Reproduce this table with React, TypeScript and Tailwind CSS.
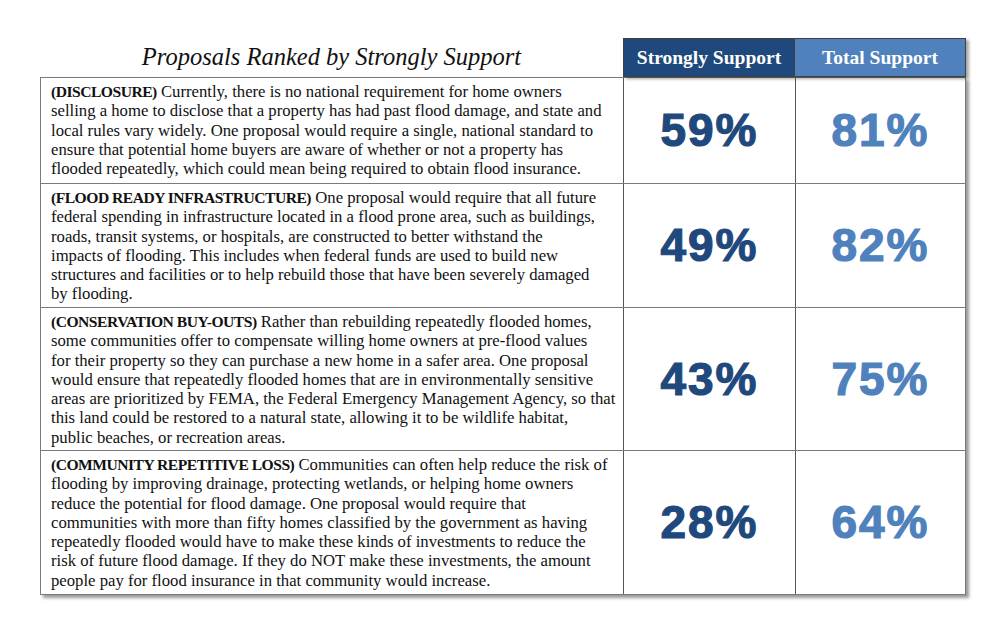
import React from "react";

const rows = [
  {
    h: "h-[105px]",
    tag: "(DISCLOSURE)",
    lines: [
      " Currently, there is no national requirement for home owners",
      "selling a home to disclose that a property has had past flood damage, and state and",
      "local rules vary widely. One proposal would require a single, national standard to",
      "ensure that potential home buyers are aware of whether or not a property has",
      "flooded repeatedly, which could mean being required to obtain flood insurance.",
    ],
    s: "59%",
    t: "81%",
  },
  {
    h: "h-[124px]",
    tag: "(FLOOD READY INFRASTRUCTURE)",
    lines: [
      " One proposal would require that all future",
      "federal spending in infrastructure located in a flood prone area, such as buildings,",
      "roads, transit systems, or hospitals, are constructed to better withstand the",
      "impacts of flooding. This includes when federal funds are used to build new",
      "structures and facilities or to help rebuild those that have been severely damaged",
      "by flooding.",
    ],
    s: "49%",
    t: "82%",
  },
  {
    h: "h-[143px]",
    tag: "(CONSERVATION BUY-OUTS)",
    lines: [
      " Rather than rebuilding repeatedly flooded homes,",
      "some communities offer to compensate willing home owners at pre-flood values",
      "for their property so they can purchase a new home in a safer area. One proposal",
      "would ensure that repeatedly flooded homes that are in environmentally sensitive",
      "areas are prioritized by FEMA, the Federal Emergency Management Agency, so that",
      "this land could be restored to a natural state, allowing it to be wildlife habitat,",
      "public beaches, or recreation areas.",
    ],
    s: "43%",
    t: "75%",
  },
  {
    h: "h-[144px]",
    tag: "(COMMUNITY REPETITIVE LOSS)",
    lines: [
      " Communities can often help reduce the risk of",
      "flooding by improving drainage, protecting wetlands, or helping home owners",
      "reduce the potential for flood damage. One proposal would require that",
      "communities with more than fifty homes classified by the government as having",
      "repeatedly flooded would have to make these kinds of investments to reduce the",
      "risk of future flood damage. If they do NOT make these investments, the amount",
      "people pay for flood insurance in that community would increase.",
    ],
    s: "28%",
    t: "64%",
  },
];

export default function App() {
  return (
    <div className="w-[1002px] h-[637px] bg-white pl-[40px] pt-[38px] font-['Liberation_Serif',serif]">
      <div className="flex h-[39px]">
        <div className="w-[583px] flex items-center justify-center italic text-[24.5px] text-[#111]">
          Proposals Ranked by Strongly Support
        </div>
        <div className="flex shadow-[3px_2px_3px_rgba(0,0,0,0.35)]">
          <div className="w-[172px] bg-[#1f497d] border border-[#404040] flex items-center justify-center text-white font-bold text-[19.5px]">
            Strongly Support
          </div>
          <div className="w-[171px] bg-[#4f81bd] border-y border-r border-[#404040] flex items-center justify-center text-white font-bold text-[19.5px]">
            Total Support
          </div>
        </div>
      </div>
      <div className="w-[926px] bg-white border border-[#7a7a7a] shadow-[3px_3px_3px_rgba(0,0,0,0.4)]">
        {rows.map((r, i) => (
          <div
            key={i}
            className={`flex ${r.h} ${i > 0 ? "border-t border-[#7a7a7a]" : ""}`}
          >
            <div className="w-[582px] pl-[10px] pt-[4px] text-[16.7px] leading-[19.25px] text-[#111] whitespace-nowrap">
              {r.lines.map((l, j) => (
                <div key={j}>
                  {j === 0 && (
                    <span className="font-bold text-[15.6px] tracking-[-0.5px]">{r.tag}</span>
                  )}
                  {l}
                </div>
              ))}
            </div>
            <div className="w-[172px] border-l border-[#555] flex items-center justify-center font-['Liberation_Sans',sans-serif] font-bold text-[46px] tracking-[2px] [-webkit-text-stroke:1.2px_currentColor] text-[#1f497d]">
              {r.s}
            </div>
            <div className="flex-1 border-l border-[#555] flex items-center justify-center font-['Liberation_Sans',sans-serif] font-bold text-[46px] tracking-[2px] [-webkit-text-stroke:1.2px_currentColor] text-[#4f81bd]">
              {r.t}
            </div>
          </div>
        ))}
      </div>
    </div>
  );
}
